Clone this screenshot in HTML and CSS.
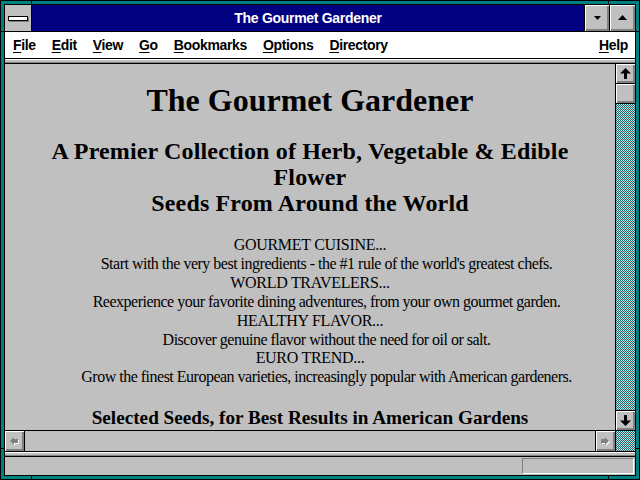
FILE: index.html
```html
<!DOCTYPE html>
<html>
<head>
<meta charset="utf-8">
<title>The Gourmet Gardener</title>
<link rel="stylesheet" href="styles.css">
</head>
<body>
<svg class="defs" width="0" height="0" aria-hidden="true">
  <defs>
    <pattern id="dither" width="2" height="2" patternUnits="userSpaceOnUse">
      <rect width="2" height="2" fill="#008080"/>
      <rect x="1" y="0" width="1" height="1" fill="#ffffff"/>
      <rect x="0" y="1" width="1" height="1" fill="#c0c0c0"/>
    </pattern>
  </defs>
</svg>
<div class="frame">
  <div class="win">
    <div class="titlebar">
      <div class="sysbox"><span class="dash"></span></div>
      <div class="title">The Gourmet Gardener</div>
      <div class="tbtn"><svg width="7" height="4" viewBox="0 0 7 4"><polygon points="0,0 7,0 3.5,4" fill="#000"/></svg></div>
      <div class="tbtn last"><svg width="9" height="5" viewBox="0 0 9 5"><polygon points="0,5 9,5 4.5,0" fill="#000"/></svg></div>
    </div>
    <div class="menubar">
      <span class="mi"><u>F</u>ile</span>
      <span class="mi"><u>E</u>dit</span>
      <span class="mi"><u>V</u>iew</span>
      <span class="mi"><u>G</u>o</span>
      <span class="mi"><u>B</u>ookmarks</span>
      <span class="mi"><u>O</u>ptions</span>
      <span class="mi"><u>D</u>irectory</span>
      <span class="mi help"><u>H</u>elp</span>
    </div>
    <div class="sep"></div>
    <div class="main">
      <div class="content">
        <h1 class="h-title">The Gourmet Gardener</h1>
        <h2 class="h-sub">A Premier Collection of Herb, Vegetable &amp; Edible<br>Flower<br>Seeds From Around the World</h2>
        <div class="blurb">
          <div class="head">GOURMET CUISINE...</div>
          <div class="desc">Start with the very best ingredients - the #1 rule of the world's greatest chefs.</div>
          <div class="head">WORLD TRAVELERS...</div>
          <div class="desc">Reexperience your favorite dining adventures, from your own gourmet garden.</div>
          <div class="head">HEALTHY FLAVOR...</div>
          <div class="desc">Discover genuine flavor without the need for oil or salt.</div>
          <div class="head">EURO TREND...</div>
          <div class="desc">Grow the finest European varieties, increasingly popular with American gardeners.</div>
        </div>
        <h3 class="h-sel">Selected Seeds, for Best Results in American Gardens</h3>
      </div>
      <div class="vscroll">
        <div class="sbtn up"><svg width="11" height="11" viewBox="0 0 11 11"><polygon points="5.5,0 11,5.5 7,5.5 7,11 4,11 4,5.5 0,5.5" fill="#000"/></svg></div>
        <div class="thumb"></div>
        <div class="track"><svg class="dfill"><rect width="100%" height="100%" fill="url(#dither)"/></svg></div>
        <div class="sbtn down"><svg width="11" height="11" viewBox="0 0 11 11"><polygon points="5.5,11 11,5.5 7,5.5 7,0 4,0 4,5.5 0,5.5" fill="#000"/></svg></div>
      </div>
      <div class="hscroll">
        <div class="hbtn left"><svg width="9" height="9" viewBox="0 0 9 9"><polygon points="1,5 5,1 5,3 9,3 9,7 5,7 5,9" fill="#fff"/><polygon points="0,4 4,0 4,2 8,2 8,6 4,6 4,8" fill="#808080"/></svg></div>
        <div class="htrack"></div>
        <div class="hbtn right"><svg width="9" height="9" viewBox="0 0 9 9"><polygon points="9,5 5,1 5,3 1,3 1,7 5,7 5,9" fill="#fff"/><polygon points="8,4 4,0 4,2 0,2 0,6 4,6 4,8" fill="#808080"/></svg></div>
      </div>
      <div class="corner"><svg class="dfill"><rect width="100%" height="100%" fill="url(#dither)"/></svg></div>
    </div>
    <div class="sep"></div>
    <div class="status"><div class="field"></div></div>
  </div>
  <span class="tick tv t1"></span>
  <span class="tick tv t2"></span>
  <span class="tick tv b1"></span>
  <span class="tick tv b2"></span>
  <span class="tick th l1"></span>
  <span class="tick th l2"></span>
  <span class="tick th r1"></span>
  <span class="tick th r2"></span>
</div>
</body>
</html>
```

FILE: styles.css
```css
* { box-sizing: border-box; }
html, body { margin: 0; padding: 0; }
body { width: 640px; height: 480px; overflow: hidden; background: #008080; }
.defs { position: absolute; width: 0; height: 0; }

.frame {
  position: relative;
  width: 640px;
  height: 480px;
  border: 1px solid #000;
  padding: 3px;
  background: #008080;
}
.win {
  width: 100%;
  height: 100%;
  border: 1px solid #000;
  display: flex;
  flex-direction: column;
  background: #c0c0c0;
}

/* title bar */
.titlebar {
  flex: none;
  height: 27px;
  display: flex;
  border-bottom: 1px solid #000;
}
.sysbox {
  width: 27px;
  border-right: 1px solid #000;
  background: #c0c0c0;
  display: flex;
  align-items: center;
  justify-content: center;
}
.dash {
  display: block;
  width: 20px;
  height: 5px;
  border: 1px solid #000;
  background: #fff;
  box-shadow: 1px 1px 0 #808080;
}
.title {
  flex: 1;
  background: #000080;
  color: #fff;
  font: bold 14px "Liberation Sans", Arial, sans-serif;
  letter-spacing: -0.3px;
  line-height: 26px;
  text-align: center;
  border-right: 1px solid #000;
}
.tbtn {
  width: 25px;
  background: #c0c0c0;
  border-right: 1px solid #000;
  box-shadow: inset 1px 1px 0 #fff, inset -1px -1px 0 #808080, inset -2px -2px 0 #808080;
  display: flex;
  align-items: center;
  justify-content: center;
  padding-bottom: 1px;
}
.tbtn.last { border-right: none; }
.tbtn svg { display: block; }

/* menu */
.menubar {
  flex: none;
  height: 27px;
  background: #fff;
  border-bottom: 1px solid #000;
  display: flex;
  font: bold 14px "Liberation Sans", Arial, sans-serif;
  letter-spacing: -0.35px;
  line-height: 26px;
  color: #000;
}
.mi { padding: 0 8px; }
.mi u { text-decoration-thickness: 1px; text-underline-offset: 2px; }
.mi.help { margin-left: auto; padding-right: 7px; }

.sep {
  flex: none;
  height: 5px;
  background: #c0c0c0;
  border-bottom: 1px solid #000;
  box-shadow: inset 0 1px 0 #fff, inset 0 -1px 0 #808080;
}

/* main */
.main {
  flex: none;
  height: 388px;
  display: grid;
  grid-template-columns: 610px 20px;
  grid-template-rows: 366px 22px;
}
.content {
  overflow: hidden;
  background: #c0c0c0;
  color: #000;
  font-family: "Liberation Serif", "Times New Roman", serif;
  text-align: center;
  padding: 0 8px;
}
.h-title {
  margin: 18px 0 0;
  font-size: 32px;
  line-height: 36px;
  font-weight: bold;
}
.h-sub {
  margin: 20px 0 0;
  font-size: 24px;
  letter-spacing: 0.15px;
  line-height: 26px;
  font-weight: bold;
}
.blurb {
  margin-top: 20px;
  font-size: 16px;
  line-height: 18.9px;
}
.head { letter-spacing: -0.3px; }
.desc { padding-left: 33px; letter-spacing: -0.5px; }
.h-sel {
  margin: 20px 0 0;
  font-size: 19.2px;
  line-height: 22px;
  font-weight: bold;
}

.vscroll {
  border-left: 1px solid #000;
  display: flex;
  flex-direction: column;
}
.sbtn {
  flex: none;
  height: 20px;
  background: #c0c0c0;
  box-shadow: inset 1px 1px 0 #fff, inset -1px -1px 0 #808080, inset -2px -2px 0 #808080;
  display: flex;
  align-items: center;
  justify-content: center;
}
.sbtn.up { border-bottom: 1px solid #000; }
.sbtn.down { border-top: 1px solid #000; }
.thumb {
  flex: none;
  height: 20px;
  background: #c0c0c0;
  border-bottom: 1px solid #000;
  box-shadow: inset 1px 1px 0 #fff, inset -1px -1px 0 #808080, inset -2px -2px 0 #808080;
}
.track { flex: 1; overflow: hidden; }
.dfill { display: block; width: 100%; height: 100%; shape-rendering: crispEdges; }
.hscroll {
  border-top: 1px solid #000;
  border-bottom: 1px solid #000;
  display: flex;
}
.hbtn {
  flex: none;
  width: 20px;
  background: #c0c0c0;
  box-shadow: inset 1px 1px 0 #fff, inset -1px -1px 0 #808080, inset -2px -2px 0 #808080;
  display: flex;
  align-items: center;
  justify-content: center;
}
.hbtn.left { border-right: 1px solid #000; }
.hbtn.right { border-left: 1px solid #000; }
.htrack { flex: 1; background: #c0c0c0; }
.corner {
  overflow: hidden;
  border-left: 1px solid #000;
  border-top: 1px solid #000;
  border-bottom: 1px solid #000;
}

/* status */
.status {
  flex: 1;
  display: flex;
  justify-content: flex-end;
  align-items: flex-start;
  background: #c0c0c0;
}
.field {
  width: 112px;
  height: 16px;
  margin: 1px 1px 0 0;
  border-top: 1px solid #808080;
  border-left: 1px solid #808080;
  border-bottom: 1px solid #fff;
  border-right: 1px solid #fff;
}

/* frame resize ticks */
.tick { position: absolute; background: #000; }
.tick.tv { width: 1px; height: 4px; }
.tick.th { width: 4px; height: 1px; }
.t1 { left: 30px; top: -1px; }
.t2 { left: 607px; top: -1px; }
.b1 { left: 30px; bottom: -1px; }
.b2 { left: 607px; bottom: -1px; }
.l1 { left: -1px; top: 30px; }
.l2 { left: -1px; top: 447px; }
.r1 { right: -1px; top: 30px; }
.r2 { right: -1px; top: 447px; }
```
